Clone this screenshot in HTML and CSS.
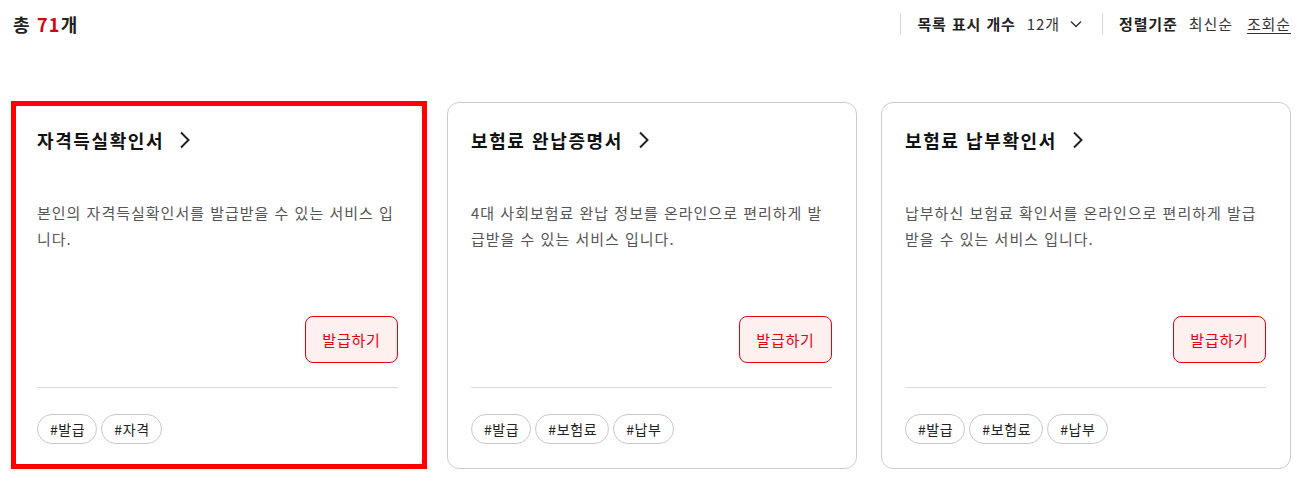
FILE: index.html
```html
<!DOCTYPE html>
<html lang="ko">
<head>
<meta charset="utf-8">
<link rel="stylesheet" href="styles.css">
</head>
<body>
<div class="page">
  <div class="topbar">
    <div class="total">총 <span class="num">71</span>개</div>
    <div class="options">
      <div class="opt-group">
        <span class="opt-label">목록 표시 개수</span>
        <span class="opt-select">12개
          <svg class="chev-down" width="12" height="8" viewBox="0 0 12 8"><path d="M1 1.5 L6 6.5 L11 1.5" fill="none" stroke="#333" stroke-width="1.4"/></svg>
        </span>
      </div>
      <div class="opt-group">
        <span class="opt-label">정렬기준</span>
        <span class="sort">최신순</span>
        <span class="sort active">조회순</span>
      </div>
    </div>
  </div>

  <div class="cards">
    <div class="card focused">
      <div class="card-title">자격득실확인서
        <svg class="chev-right" width="12" height="18" viewBox="0 0 12 18"><path d="M2 1.5 L9.5 9 L2 16.5" fill="none" stroke="#222" stroke-width="2"/></svg>
      </div>
      <p class="card-desc">본인의 자격득실확인서를 발급받을 수 있는 서비스 입니다.</p>
      <div class="card-action"><button class="issue-btn">발급하기</button></div>
      <div class="tags"><span class="tag">#발급</span><span class="tag">#자격</span></div>
    </div>
    <div class="card">
      <div class="card-title">보험료 완납증명서
        <svg class="chev-right" width="12" height="18" viewBox="0 0 12 18"><path d="M2 1.5 L9.5 9 L2 16.5" fill="none" stroke="#222" stroke-width="2"/></svg>
      </div>
      <p class="card-desc">4대 사회보험료 완납 정보를 온라인으로 편리하게 발급받을 수 있는 서비스 입니다.</p>
      <div class="card-action"><button class="issue-btn">발급하기</button></div>
      <div class="tags"><span class="tag">#발급</span><span class="tag">#보험료</span><span class="tag">#납부</span></div>
    </div>
    <div class="card">
      <div class="card-title">보험료 납부확인서
        <svg class="chev-right" width="12" height="18" viewBox="0 0 12 18"><path d="M2 1.5 L9.5 9 L2 16.5" fill="none" stroke="#222" stroke-width="2"/></svg>
      </div>
      <p class="card-desc">납부하신 보험료 확인서를 온라인으로 편리하게 발급받을 수 있는 서비스 입니다.</p>
      <div class="card-action"><button class="issue-btn">발급하기</button></div>
      <div class="tags"><span class="tag">#발급</span><span class="tag">#보험료</span><span class="tag">#납부</span></div>
    </div>
  </div>
</div>
</body>
</html>
```

FILE: styles.css
```css
* { box-sizing: border-box; }
html, body { margin: 0; padding: 0; background: #fff; }
body {
  font-family: "Noto Sans CJK KR", "Noto Sans", sans-serif;
  color: #111;
}
.page {
  padding: 0 12px 0 13px;
}
.topbar {
  height: 48px;
  display: flex;
  align-items: center;
  justify-content: space-between;
}
.total {
  font-size: 18px;
  font-weight: 700;
  color: #222;
  line-height: 1;
  letter-spacing: 1.2px;
}
.total .num { color: #d7000f; }
.options {
  display: flex;
  align-items: center;
}
.opt-group {
  display: flex;
  align-items: center;
  border-left: 1px solid #d6d6d6;
  height: 20px;
  padding-left: 16px;
  font-size: 15px;
  line-height: 20px;
  letter-spacing: 0.9px;
}
.opt-group + .opt-group { margin-left: 20px; }
.opt-label { font-weight: 700; color: #222; margin-right: 11px; }
.opt-select { display: flex; align-items: center; color: #333; }
.chev-down { margin-left: 10px; }
.sort { color: #333; }
.sort + .sort { margin-left: 14px; }
.sort.active { text-decoration: underline; text-underline-offset: 3px; }

.cards {
  margin-top: 54px;
  display: grid;
  grid-template-columns: repeat(3, 410px);
  column-gap: 24px;
}
.card {
  position: relative;
  height: 367px;
  border: 1px solid #cccccc;
  border-radius: 12px;
  padding: 24px 24px 24px 23px;
  display: flex;
  flex-direction: column;
}
.card.focused::after {
  content: "";
  position: absolute;
  left: -3px;
  right: -5px;
  top: -2px;
  bottom: -1px;
  border: 5px solid #ff0000;
  pointer-events: none;
}
.card-title {
  display: flex;
  align-items: center;
  font-size: 18px;
  font-weight: 700;
  line-height: 26px;
  color: #111;
  letter-spacing: 1.6px;
}
.chev-right { margin-left: 15px; }
.card-desc {
  margin: 47px 0 0;
  font-size: 15px;
  line-height: 26px;
  color: #555;
  min-height: 116px;
  letter-spacing: 1px;
}
.card-action {
  display: flex;
  justify-content: flex-end;
  border-bottom: 1px solid #d9d9d9;
  padding-bottom: 24px;
}
.issue-btn {
  width: 93px;
  height: 47px;
  border: 1px solid #e60012;
  border-radius: 8px;
  background: #fff0f0;
  color: #e60012;
  font-family: inherit;
  font-size: 15px;
  letter-spacing: 0.8px;
  padding: 0;
}
.tags {
  margin-top: 26px;
  display: flex;
  gap: 4px;
}
.tag {
  height: 30px;
  line-height: 28px;
  padding: 0 11px 0 12px;
  border: 1px solid #c9c9c9;
  border-radius: 15px;
  font-size: 14px;
  color: #222;
  letter-spacing: 0.6px;
}
```
